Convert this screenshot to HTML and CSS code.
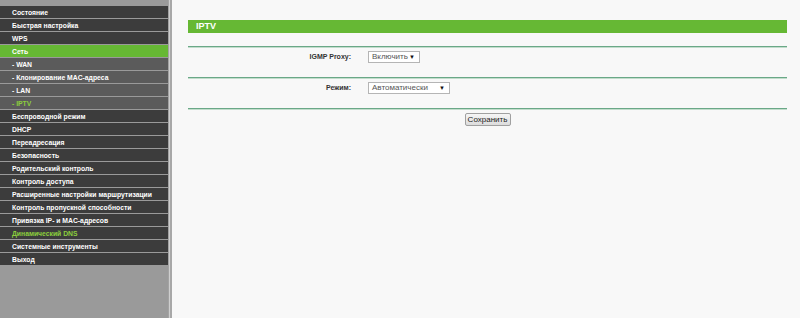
FILE: index.html
```html
<!DOCTYPE html>
<html lang="ru">
<head>
  <meta charset="UTF-8">
  <title>IPTV</title>
  <link rel="stylesheet" href="styles.css">
</head>
<body>

  <div class="menu">
    <div class="item">Состояние</div>
    <div class="item">Быстрая настройка</div>
    <div class="item">WPS</div>
    <div class="item active">Сеть</div>
    <div class="item sub">- WAN</div>
    <div class="item sub">- Клонирование MAC-адреса</div>
    <div class="item sub">- LAN</div>
    <div class="item sub current">- IPTV</div>
    <div class="item">Беспроводной режим</div>
    <div class="item">DHCP</div>
    <div class="item">Переадресация</div>
    <div class="item">Безопасность</div>
    <div class="item">Родительский контроль</div>
    <div class="item">Контроль доступа</div>
    <div class="item">Расширенные настройки маршрутизации</div>
    <div class="item">Контроль пропускной способности</div>
    <div class="item">Привязка IP- и MAC-адресов</div>
    <div class="item current">Динамический DNS</div>
    <div class="item">Системные инструменты</div>
    <div class="item">Выход</div>
  </div>
  <div class="divider"></div>

  <div class="main">
    <div class="title">IPTV</div>
    <div class="spacer"></div>

    <!-- IGMP -->
    <div class="line"></div>
    <div class="row">
      <div class="label">IGMP Proxy:</div>
      <div class="select w-short">Включить<span class="arrow">▼</span></div>
    </div>

    <!-- режим -->
    <div class="line"></div>
    <div class="row">
      <div class="label">Режим:</div>
      <div class="select w-long">Автоматически<span class="arrow">▼</span></div>
    </div>

    <div class="line"></div>
    <div class="buttons">
      <button>Сохранить</button>
    </div>
  </div>

</body>
</html>
```

FILE: styles.css
```css
body {
  margin: 0;
  padding: 0;
  display: flex;
  min-height: 318px;
  font-family: 'Liberation Sans', Arial, sans-serif;
  background-color: #f8f8f8;
}
.menu {
  width: 168px;
  flex-shrink: 0;
  background-color: #9a9a9a;
  padding-top: 6px;
}
.item {
  height: 12px;
  line-height: 13px;
  margin-bottom: 1px;
  padding-left: 12px;
  background-color: #3c3c3c;
  color: #fff;
  font-size: 6.8px;
  font-weight: bold;
  white-space: nowrap;
}
.item.sub {
  background-color: #5b5b5b;
}
.item.active {
  background-color: #66b834;
}
.item.current {
  color: #8ccf3c;
}
.divider {
  width: 4px;
  flex-shrink: 0;
  background: linear-gradient(to right, #a3a3a3 0, #a3a3a3 1px, #cfcfcf 1px, #cfcfcf 2px, #a8a8a8 2px, #a8a8a8 4px);
}
.main {
  flex: 1;
  padding: 20px 13px 0 16px;
}
.title {
  height: 13px;
  line-height: 13px;
  background-color: #66b834;
  color: #fff;
  font-size: 9px;
  font-weight: bold;
  padding-left: 8px;
}
.spacer {
  height: 13px;
}
.line {
  height: 1px;
  background-color: #6aa887;
  border-bottom: 1px solid #c2ddcc;
}
.row {
  display: flex;
  align-items: flex-start;
  height: 29px;
  padding-top: 3px;
  box-sizing: border-box;
}
.label {
  width: 163px;
  text-align: right;
  font-size: 7px;
  font-weight: bold;
  color: #333;
  line-height: 12px;
  flex-shrink: 0;
}
.select {
  margin-left: 17px;
  height: 12px;
  line-height: 10px;
  box-sizing: border-box;
  border: 1px solid #b5b5b5;
  background-color: #fff;
  font-size: 8px;
  color: #555;
  padding-left: 3px;
  display: flex;
  justify-content: space-between;
}
.w-short {
  width: 52px;
}
.w-long {
  width: 82px;
}
.arrow {
  font-size: 6px;
  color: #111;
  padding-right: 4px;
}
.buttons {
  display: flex;
  justify-content: center;
  padding-top: 3px;
}
button {
  font-family: 'Liberation Sans', Arial, sans-serif;
  font-size: 8px;
  color: #222;
  height: 13px;
  width: 46px;
  padding: 0;
  border: 1px solid #a0a0a0;
  border-radius: 2px;
  background: linear-gradient(#f6f6f6, #dcdcdc);
}
```
